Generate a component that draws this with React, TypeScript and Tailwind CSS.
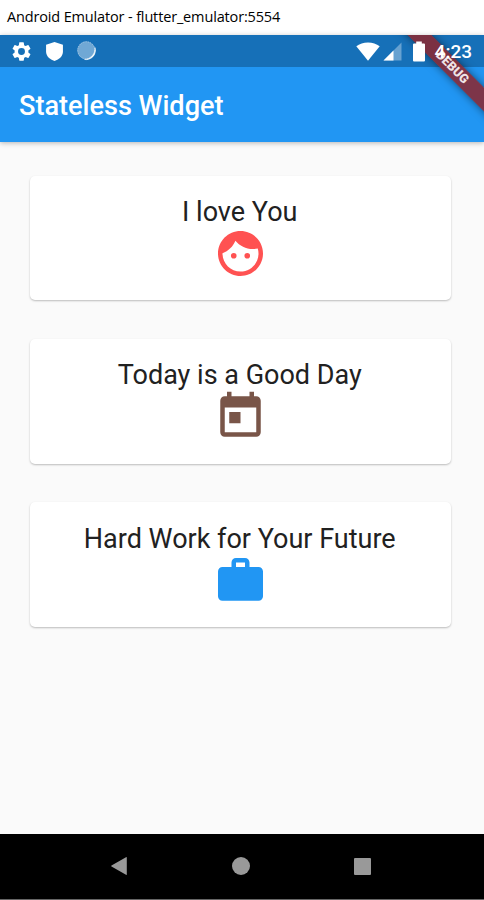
import React from "react";

const GEAR =
  "M19.14 12.94c.04-.3.06-.61.06-.94s-.02-.64-.07-.94l2.03-1.58a.49.49 0 0 0 .12-.61l-1.92-3.32a.49.49 0 0 0-.59-.22l-2.39.96c-.5-.38-1.03-.7-1.62-.94l-.36-2.54a.48.48 0 0 0-.48-.41h-3.84c-.24 0-.43.17-.47.41l-.36 2.54c-.59.24-1.13.57-1.62.94l-2.39-.96c-.22-.08-.47 0-.59.22L2.74 8.87c-.12.21-.08.47.12.61l2.03 1.58c-.05.3-.09.63-.09.94s.02.64.07.94l-2.03 1.58a.49.49 0 0 0-.12.61l1.92 3.32c.12.22.37.29.59.22l2.39-.96c.5.38 1.03.7 1.62.94l.36 2.54c.05.24.24.41.48.41h3.84c.24 0 .44-.17.47-.41l.36-2.54c.59-.24 1.13-.56 1.62-.94l2.39.96c.22.08.47 0 .59-.22l1.92-3.32c.12-.22.07-.47-.12-.61l-2.01-1.58zM12 15.6A3.6 3.6 0 1 1 12 8.4a3.6 3.6 0 0 1 0 7.2z";

const FACE =
  "M10.25 13a1.25 1.25 0 1 1-2.5 0 1.25 1.25 0 0 1 2.5 0zM15 11.75a1.25 1.25 0 1 0 0 2.5 1.25 1.25 0 0 0 0-2.5zM22 12c0 5.52-4.48 10-10 10S2 17.52 2 12 6.48 2 12 2s10 4.48 10 10zm-2 0c0-.78-.12-1.53-.33-2.24-.7.15-1.42.24-2.17.24-3.13 0-5.92-1.44-7.76-3.69C8.69 8.87 6.6 10.88 4 11.86c.01.04 0 .09 0 .14 0 4.41 3.59 8 8 8s8-3.59 8-8z";

const TODAY =
  "M19 3h-1V1h-2v2H8V1H6v2H5c-1.11 0-1.99.9-1.99 2L3 19c0 1.1.89 2 2 2h14c1.1 0 2-.9 2-2V5c0-1.1-.9-2-2-2zm0 16H5V8h14v11zM7 10h5v5H7z";

const WORK =
  "M20 6h-4V4c0-1.11-.89-2-2-2h-4c-1.11 0-2 .89-2 2v2H4c-1.11 0-1.99.89-1.99 2L2 19c0 1.11.89 2 2 2h16c1.11 0 2-.89 2-2V8c0-1.11-.89-2-2-2zm-6 0h-4V4h4v2z";

const cards = [
  { text: "I love You", color: "text-[#ff5252]", path: FACE },
  { text: "Today is a Good Day", color: "text-[#795548]", path: TODAY },
  { text: "Hard Work for Your Future", color: "text-[#2196f3]", path: WORK },
];

function StatusBar() {
  return (
    <div className="flex h-8 items-center bg-[#1670b8] text-white">
      <svg className="ml-[10px] h-[23px] w-[23px]" viewBox="0 0 24 24" fill="currentColor">
        <path d={GEAR} />
      </svg>
      <svg className="ml-[10px] h-[23px] w-[23px]" viewBox="0 0 24 24" fill="currentColor">
        <path d="M12 2 3.200 5v7c0 4.800 3.900 8.500 8.800 9.800 4.900-1.300 8.800-5 8.800-9.800V5z" />
      </svg>
      <svg className="ml-[10px] h-[22px] w-[22px]" viewBox="0 0 22 22">
        <circle cx="10.300" cy="10.300" r="9" fill="#70a8d5" />
        <circle cx="10.300" cy="10.300" r="8.500" fill="none" stroke="#a6c9e5" strokeWidth="1" strokeDasharray="1 1.300" />
        <path d="M19 7.500A9.300 9.300 0 0 1 8.500 19.500 11 11 0 0 0 19 7.500z" fill="#fff" stroke="#fff" strokeWidth=".5" />
      </svg>
      <svg className="ml-auto h-[19px] w-6 shrink-0" viewBox="0 0 24 19" fill="currentColor">
        <path d="M.3 4.300C3.500 1.800 7.500.5 12 .5s8.500 1.300 11.700 3.800L12 18.700z" />
      </svg>
      <svg className="ml-[3px] h-[19px] w-[19px] shrink-0" viewBox="0 0 19 19" fill="currentColor">
        <path d="M18.500.5v18H.5z" opacity=".35" />
        <path d="M10.500 8.500v10H.5z" />
      </svg>
      <svg className="relative z-20 ml-[11px] h-[21px] w-3 shrink-0" viewBox="0 0 12 21" fill="currentColor">
        <path d="M3.200.5h5.600v2H11q1 0 1 1v16q0 1-1 1H1q-1 0-1-1v-16q0-1 1-1h2.200z" />
      </svg>
      <span className="relative z-20 mr-[12px] ml-[10px] text-[19px] leading-none font-medium">4:23</span>
    </div>
  );
}

function DebugBanner() {
  return (
    <div className="pointer-events-none absolute top-0 right-0 h-[107px] w-[100px] overflow-hidden">
      <div className="absolute top-[23.500px] left-[-12.500px] flex h-[17px] w-[160px] rotate-45 items-center justify-center bg-[#8a2831]/88 text-[12.600px] leading-none font-black text-[#f0e4e6] shadow-[0_0_8px_rgba(0,0,0,0.5)]">
        DEBUG
      </div>
    </div>
  );
}

export default function App() {
  return (
    <div className="flex h-[900px] w-[484px] flex-col overflow-hidden bg-[#fafafa] font-[Roboto,sans-serif]">
      <div className="flex h-[35px] shrink-0 items-center bg-white pb-px pl-[7px] font-['Open_Sans',sans-serif] text-[14.500px] tracking-[-0.150px] text-black">
        <span className="whitespace-nowrap">Android Emulator - flutter_emulator:5554</span>
      </div>
      <div className="relative z-10 shrink-0 shadow-[0_1px_5px_rgba(0,0,0,0.28)]">
        <StatusBar />
        <div className="flex h-[75px] items-center bg-[#2196f3] pt-[4px] pl-[19px] text-[27.100px] font-medium text-white">
          <span className="whitespace-nowrap">Stateless Widget</span>
        </div>
        <DebugBanner />
      </div>
      <main className="flex flex-1 flex-col gap-[38.600px] pt-[33.600px] pr-[33px] pl-[30px]">
        {cards.map((c) => (
          <section
            key={c.text}
            className="flex h-[124.800px] shrink-0 flex-col items-center rounded-[5px] bg-white pt-[20.400px] pr-[1.500px] shadow-[0_1px_2px_rgba(0,0,0,0.25)]"
          >
            <span className="text-[27px] leading-[32px] whitespace-nowrap text-[#212121]">{c.text}</span>
            <svg className={`-mt-[2px] ml-px h-[55px] w-[55px] ${c.color}`} viewBox="0 0 24.440 24.440" fill="currentColor">
              <path d={c.path} transform="translate(.22 .22)" />
            </svg>
          </section>
        ))}
      </main>
      <nav className="flex h-[66px] shrink-0 items-center border-b border-[#666] bg-black pb-px text-[#999]">
        <svg className="ml-[109px] h-5 w-5" viewBox="0 0 20 20" fill="currentColor">
          <path d="M17.800 1.500v17q0 .8-.8.300L2.500 10.500q-.8-.5 0-1L17 1.200q.8-.5.8.3z" />
        </svg>
        <div className="ml-[102.500px] h-[18px] w-[18px] rounded-full bg-current" />
        <div className="ml-[104px] h-[17px] w-[17px] rounded-[1px] bg-current" />
      </nav>
    </div>
  );
}
